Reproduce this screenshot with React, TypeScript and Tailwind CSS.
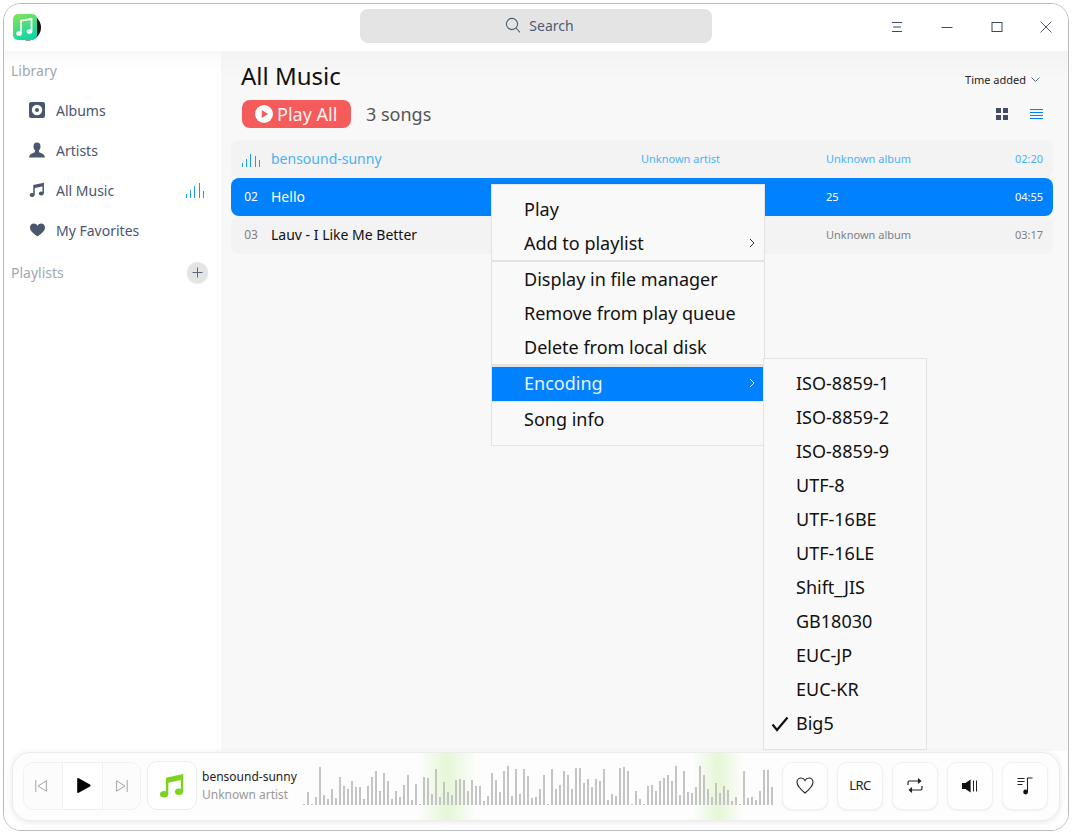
import React from "react";

const WAVE = [1,13,1,8,38,10,6,16,7,28,19,16,24,18,18,6,19,28,34,14,32,24,6,14,8,20,30,5,21,1,28,27,11,36,8,23,13,10,25,26,
25,14,25,19,19,4,9,32,25,13,34,39,9,36,11,36,29,7,8,16,30,1,36,16,20,34,30,16,37,37,22,26,18,26,24,36,5,11,9,37,
38,34,1,14,6,1,19,20,14,24,27,30,24,39,10,34,13,12,18,39,30,16,8,22,12,19,15,4,8,1,34,7,8,5,14,35,35,18];

function Eq({ color, heights }: { color: string; heights: number[] }) {
  const xs = [0, 4, 8, 13, 17];
  return (
    <svg width="18" height="16" viewBox="0 0 18 16" className="shrink-0">
      {heights.map((h, i) => (
        <rect key={i} x={xs[i]} y={16 - h} width="1" height={h} fill={color} />
      ))}
    </svg>
  );
}

function Note({ size = 16, color = "#4b566f" }: { size?: number; color?: string }) {
  return (
    <svg width={size} height={size} viewBox="0 0 16 16" fill="none">
      <path d="M5 12.8V3.6L14.2 1.6V11" stroke={color} strokeWidth="1.5" />
      <path d="M5 3.4L14.2 1.4V4.2L5 6.2Z" fill={color} />
      <ellipse cx="3.1" cy="13" rx="2.5" ry="2" fill={color} />
      <ellipse cx="12.3" cy="11.6" rx="2.5" ry="2" fill={color} />
    </svg>
  );
}

function NavItem({ icon, label, right }: { icon: React.ReactNode; label: string; right?: React.ReactNode }) {
  return (
    <div className="flex h-[40px] items-center pl-[25px] pr-[17px] text-[14px] text-[#4a5570]">
      <span className="flex w-[16px] justify-center">{icon}</span>
      <span className="ml-[11px] flex-1">{label}</span>
      {right}
    </div>
  );
}

function Row({
  num, title, artist, album, time, kind,
}: {
  num?: string; title: string; artist: string; album: string; time: string; kind: "playing" | "selected" | "plain";
}) {
  const bg = kind === "selected" ? "bg-[#0081ff] text-white" : "bg-[#f3f3f3]";
  const sub = kind === "selected" ? "text-white" : kind === "playing" ? "text-[#4eb1f7]" : "text-[#7f7f7f]";
  const ttl = kind === "selected" ? "text-white" : kind === "playing" ? "text-[#4eb1f7]" : "text-[#111]";
  return (
    <div className={`flex h-[38px] items-center rounded-[8px] pr-[10px] ${bg}`}>
      <div className={`flex w-[40px] justify-center text-[12px] ${sub}`}>
        {kind === "playing" ? <Eq color="#1e9bf5" heights={[4, 8, 13, 11, 7]} /> : num}
      </div>
      <div className={`w-[370px] pb-[2px] text-[14px] ${ttl}`}>{title}</div>
      <div className={`w-[185px] text-[11px] ${sub}`}>{artist}</div>
      <div className={`flex-1 text-[11px] ${sub}`}>{album}</div>
      <div className={`text-[11px] ${sub}`}>{time}</div>
    </div>
  );
}

function MenuItem({ label, arrow, active, check }: { label: string; arrow?: boolean; active?: boolean; check?: boolean }) {
  return (
    <div className={`relative flex h-[34px] items-center pl-[32px] pr-[9px] text-[18px] ${active ? "bg-[#0081ff] pb-[2px] text-[#e8f3ff]" : "text-[#111]"}`}>
      {check && (
        <svg width="18" height="16" viewBox="0 0 18 16" className="absolute left-[7px] top-[10px]" fill="none">
          <path d="M1.5 8.5L6 14L16.5 1.5" stroke="#111" strokeWidth="2.2" />
        </svg>
      )}
      <span className="flex-1">{label}</span>
      {arrow && (
        <svg width="6" height="10" viewBox="0 0 6 10" fill="none">
          <path d="M1 1L5 5L1 9" stroke={active ? "#e8f3ff" : "#333"} strokeWidth="1" />
        </svg>
      )}
    </div>
  );
}

function PlayerButton({ children }: { children: React.ReactNode }) {
  return (
    <div className="flex h-[48px] w-[46px] items-center justify-center rounded-[10px] border border-[#f1f1f1] bg-[#fefefe] shadow-[0_1px_2px_rgba(0,0,0,0.06)]">
      {children}
    </div>
  );
}

export default function App() {
  return (
    <div className="h-[833px] w-[1072px] bg-white p-[3px] font-['Noto_Sans',sans-serif]">
      <div className="relative flex h-[828px] w-[1066px] flex-col overflow-hidden rounded-[18px] border border-[#bcbcbc] bg-white">
        {/* Title bar */}
        <header className="relative flex h-[47px] shrink-0 items-center bg-white">
          <svg width="29" height="27" viewBox="0 0 29 27" className="ml-[9px] mt-[-1px]">
            <defs>
              <linearGradient id="lg" x1="0" y1="0" x2="0.4" y2="1">
                <stop offset="0" stopColor="#8be552" />
                <stop offset="1" stopColor="#12d7a4" />
              </linearGradient>
            </defs>
            <circle cx="15" cy="13.5" r="13" fill="#111" />
            <rect x="0" y="0" width="24" height="26" rx="5" fill="url(#lg)" />
            <path d="M8 19V6.5L18.5 5V17" stroke="#fff" strokeWidth="1.8" fill="none" />
            <ellipse cx="6" cy="19.5" rx="2.8" ry="2.3" fill="#fff" />
            <ellipse cx="16.5" cy="17.5" rx="2.8" ry="2.3" fill="#fff" />
          </svg>
          <div className="absolute left-[356px] top-[5px] flex h-[34px] w-[352px] items-center justify-center gap-[8px] rounded-[8px] bg-[#e4e4e4] pb-[2px] pl-[7px] text-[14px] text-[#4f5a75]">
            <svg width="16" height="16" viewBox="0 0 16 16" fill="none" stroke="#4f5a75" strokeWidth="1.1">
              <circle cx="7" cy="7" r="5.6" />
              <path d="M11 11L15 15.4" />
            </svg>
            <span>Search</span>
          </div>
          <div className="ml-auto mt-[-2px] flex items-center pr-[16px]">
            <svg width="12" height="12" viewBox="0 0 12 12" stroke="#3d4963" strokeWidth="1" className="mr-[38px]">
              <path d="M1 1.5H11M2 6H10M1 10.5H11" />
            </svg>
            <svg width="12" height="12" viewBox="0 0 12 12" stroke="#3d4963" strokeWidth="1" className="mr-[38px]">
              <path d="M0.5 6.5H11.5" />
            </svg>
            <svg width="12" height="12" viewBox="0 0 12 12" stroke="#3d4963" fill="none" strokeWidth="1" className="mr-[37px]">
              <rect x="1" y="1.5" width="10" height="9" />
            </svg>
            <svg width="12" height="12" viewBox="0 0 12 12" stroke="#3d4963" strokeWidth="0.9">
              <path d="M0.5 0.5L11.5 11.5M11.5 0.5L0.5 11.5" />
            </svg>
          </div>
        </header>

        {/* Main */}
        <div className="flex min-h-0 flex-1">
          <aside className="w-[217px] shrink-0 bg-[linear-gradient(#f7f7f7,#ffffff_18px)] pt-[9px]">
            <div className="pl-[7px] text-[14px] leading-[22px] text-[#a3a7ae]">Library</div>
            <div className="mt-[8px]">
              <NavItem
                label="Albums"
                icon={
                  <svg width="16" height="16" viewBox="0 0 16 16">
                    <rect x="0" y="0" width="16" height="16" rx="2" fill="#4b566f" />
                    <circle cx="8" cy="8" r="5.2" fill="#fff" />
                    <circle cx="8" cy="8" r="2" fill="#4b566f" />
                  </svg>
                }
              />
              <NavItem
                label="Artists"
                icon={
                  <svg width="16" height="16" viewBox="0 0 16 16" fill="#4b566f">
                    <ellipse cx="8" cy="4.6" rx="3.5" ry="4.2" />
                    <path d="M6.2 8H9.8L10.4 10.6C12.4 11.2 15.4 12 16 15.4H0C0.6 12 3.6 11.2 5.6 10.6Z" />
                  </svg>
                }
              />
              <NavItem
                label="All Music"
                icon={<Note />}
                right={<Eq color="#1e9bf5" heights={[4, 8, 12, 15, 7]} />}
              />
              <NavItem
                label="My Favorites"
                icon={
                  <svg width="15" height="14" viewBox="0 0 15 14" fill="#4b566f">
                    <path d="M7.5 13.5C3 10 0 7.8 0 4.4C0 2 1.9 0.6 3.8 0.6C5.4 0.6 6.7 1.4 7.5 2.7C8.3 1.4 9.6 0.6 11.2 0.6C13.1 0.6 15 2 15 4.4C15 7.8 12 10 7.5 13.5Z" />
                  </svg>
                }
              />
            </div>
            <div className="mt-[10px] flex h-[24px] items-center justify-between pl-[7px] pr-[13px] text-[14px] text-[#a3a7ae]">
              <span>Playlists</span>
              <span className="flex h-[21px] w-[21px] items-center justify-center rounded-full bg-[#e3e4e6] shadow-[0_1px_2px_rgba(0,0,0,0.1)]">
                <svg width="11" height="11" viewBox="0 0 11 11" stroke="#5c6578" strokeWidth="1">
                  <path d="M5.5 0.5V10.5M0.5 5.5H10.5" />
                </svg>
              </span>
            </div>
          </aside>

          <main className="flex-1 bg-[linear-gradient(#f3f3f3,#f8f8f9_28px)] pl-[10px] pr-[15px] pt-[9px]">
            <div className="flex h-[32px] items-center justify-between pl-[10px] pr-[13px]">
              <h1 className="text-[24px] leading-[32px] text-[#111]">All Music</h1>
              <div className="mt-[8px] flex items-center gap-[5px] text-[11px] text-[#222]">
                <span>Time added</span>
                <svg width="9" height="6" viewBox="0 0 9 6" fill="none" stroke="#5a6478" strokeWidth="1">
                  <path d="M0.5 0.5L4.5 4.5L8.5 0.5" />
                </svg>
              </div>
            </div>
            <div className="mt-[8px] flex h-[28px] items-center pl-[11px] pr-[10px]">
              <div className="flex h-[28px] w-[109px] items-center rounded-[8px] bg-[#f55b5b] pl-[13px] text-[18px] text-[#fff2f2]">
                <svg width="18" height="18" viewBox="0 0 18 18" className="mr-[4px]">
                  <circle cx="9" cy="9" r="9" fill="#fff" />
                  <path d="M6.8 5L13 9L6.8 13Z" fill="#f55b5b" />
                </svg>
                <span>Play All</span>
              </div>
              <span className="ml-[15px] text-[18px] text-[#555]">3 songs</span>
              <div className="ml-auto flex items-center gap-[22px]">
                <svg width="12" height="12" viewBox="0 0 12 12" fill="#414c66">
                  <rect x="0" y="0" width="5" height="5" />
                  <rect x="7" y="0" width="5" height="5" />
                  <rect x="0" y="7" width="5" height="5" />
                  <rect x="7" y="7" width="5" height="5" />
                </svg>
                <svg width="13" height="10" viewBox="0 0 13 10" stroke="#0081ff" strokeWidth="1">
                  <path d="M0 0.5H13M0 3.5H13M0 6.5H13M0 9.5H13" />
                </svg>
              </div>
            </div>
            <div className="mt-[12px] flex flex-col">
              <Row kind="playing" title="bensound-sunny" artist="Unknown artist" album="Unknown album" time="02:20" />
              <Row kind="selected" num="02" title="Hello" artist="" album="25" time="04:55" />
              <Row kind="plain" num="03" title="Lauv - I Like Me Better" artist="" album="Unknown album" time="03:17" />
            </div>
          </main>
        </div>

        {/* Player */}
        <footer className="h-[79px] shrink-0 bg-white px-[8px] pt-[1px]">
          <div className="relative flex h-[69px] items-center overflow-hidden rounded-[18px] border border-[#ececec] bg-[#fdfdfd] pl-[10px] shadow-[0_1px_6px_rgba(0,0,0,0.1)]">
            <div className="absolute bottom-0 left-[405px] top-0 w-[58px] bg-linear-to-r from-transparent via-[#e6f6d6] to-transparent" />
            <div className="absolute bottom-0 left-[680px] top-0 w-[50px] bg-linear-to-r from-transparent via-[#e6f6d6] to-transparent" />

            <div className="relative mb-[2px] flex h-[48px] w-[118px] shrink-0 rounded-[10px] border border-[#f1f1f1] bg-[#fcfcfc]">
              <div className="flex w-[38px] items-center justify-center pr-[4px]">
                <svg width="12" height="12" viewBox="0 0 12 12" fill="none" stroke="#9a9a9a" strokeWidth="0.9">
                  <path d="M0.8 0V12M11.4 0.8V11.2L3 6Z" />
                </svg>
              </div>
              <div className="flex w-[41px] items-center justify-center border-x border-[#f1f1f1] bg-white pl-[2px]">
                <svg width="15" height="15" viewBox="0 0 15 15" fill="#000">
                  <path d="M1.2 0.8C1.2 0.1 2 -0.2 2.7 0.2L14 6.5C14.7 7 14.7 8 14 8.5L2.7 14.8C2 15.2 1.2 14.9 1.2 14.2Z" />
                </svg>
              </div>
              <div className="flex flex-1 items-center justify-center">
                <svg width="12" height="12" viewBox="0 0 12 12" fill="none" stroke="#9a9a9a" strokeWidth="0.9">
                  <path d="M11.2 0V12M0.6 0.8V11.2L9 6Z" />
                </svg>
              </div>
            </div>

            <div className="relative mb-[2px] ml-[6px] flex h-[49px] w-[50px] shrink-0 items-center justify-center rounded-[10px] border border-[#ededed] bg-white">
              <Note size={26} color="#7ed321" />
            </div>

            <div className="relative mb-[2px] ml-[5px] w-[101px] shrink-0">
              <div className="text-[12px] leading-[18px] text-[#222]">bensound-sunny</div>
              <div className="text-[12px] leading-[17px] text-[#9a9a9a]">Unknown artist</div>
            </div>

            <div className="relative mb-[4px] flex h-[40px] w-[472px] shrink-0 items-end gap-[2px] self-center">
              {WAVE.map((h, i) => (
                <div key={i} className="w-[2px] shrink-0 bg-[#c4c4c4]" style={{ height: h }} />
              ))}
            </div>

            <div className="relative mb-[2px] ml-[7px] flex gap-[9px]">
              <PlayerButton>
                <svg width="18" height="17" viewBox="0 0 18 17" fill="none" stroke="#222" strokeWidth="1.1">
                  <path d="M9 16C4 11.8 1 9 1 5.2C1 2.6 3 1 5 1C6.8 1 8.2 2 9 3.6C9.8 2 11.2 1 13 1C15 1 17 2.6 17 5.2C17 9 14 11.8 9 16Z" />
                </svg>
              </PlayerButton>
              <PlayerButton>
                <span className="text-[13px] tracking-[-0.6px] text-[#222]">LRC</span>
              </PlayerButton>
              <PlayerButton>
                <svg width="16" height="15" viewBox="0 0 16 15" fill="none" stroke="#222" strokeWidth="1.2">
                  <path d="M1 7V4.4C1 3.6 1.6 3 2.4 3H13" />
                  <path d="M11 0.6L13.6 3L11 5.4" fill="#222" />
                  <path d="M15 8V10.6C15 11.4 14.4 12 13.6 12H3" />
                  <path d="M5 9.6L2.4 12L5 14.4" fill="#222" />
                </svg>
              </PlayerButton>
              <PlayerButton>
                <svg width="16" height="14" viewBox="0 0 16 14">
                  <path d="M0 4H3.5L8.6 0.6V13.4L3.5 10H0Z" fill="#111" />
                  <rect x="11" y="1.5" width="1" height="11" fill="#222" />
                  <rect x="14" y="1.5" width="1" height="11" fill="#222" />
                </svg>
              </PlayerButton>
              <PlayerButton>
                <svg width="16" height="18" viewBox="0 0 16 18" fill="none">
                  <path d="M0.5 1.5H7.5M0.5 4.5H7.5M0.5 7.5H5.5" stroke="#222" strokeWidth="1" />
                  <path d="M10.5 15V1H15.5" stroke="#222" strokeWidth="1.1" />
                  <circle cx="8.6" cy="15" r="2.4" fill="#111" />
                </svg>
              </PlayerButton>
            </div>
          </div>
        </footer>

        {/* Context menu */}
        <div className="absolute left-[487px] top-[180px] w-[274px] border border-[#e3e3e3] bg-[#f9f9f9] pb-[9px] pt-[7px]">
          <MenuItem label="Play" />
          <MenuItem label="Add to playlist" arrow />
          <div className="h-[2px] bg-[#e3e3e3]" />
          <MenuItem label="Display in file manager" />
          <MenuItem label="Remove from play queue" />
          <MenuItem label="Delete from local disk" />
          <div className="h-[3px] bg-[#e3e3e3]" />
          <MenuItem label="Encoding" arrow active />
          <div className="h-[1px] bg-[#e8e8e8]" />
          <MenuItem label="Song info" />
        </div>

        {/* Encoding submenu */}
        <div className="absolute left-[759px] top-[354px] w-[164px] border border-[#e3e3e3] bg-[#f9f9f9] pb-[9px] pt-[7px]">
          {["ISO-8859-1", "ISO-8859-2", "ISO-8859-9", "UTF-8", "UTF-16BE", "UTF-16LE", "Shift_JIS", "GB18030", "EUC-JP", "EUC-KR"].map((e) => (
            <MenuItem key={e} label={e} />
          ))}
          <MenuItem label="Big5" check />
        </div>
      </div>
    </div>
  );
}
